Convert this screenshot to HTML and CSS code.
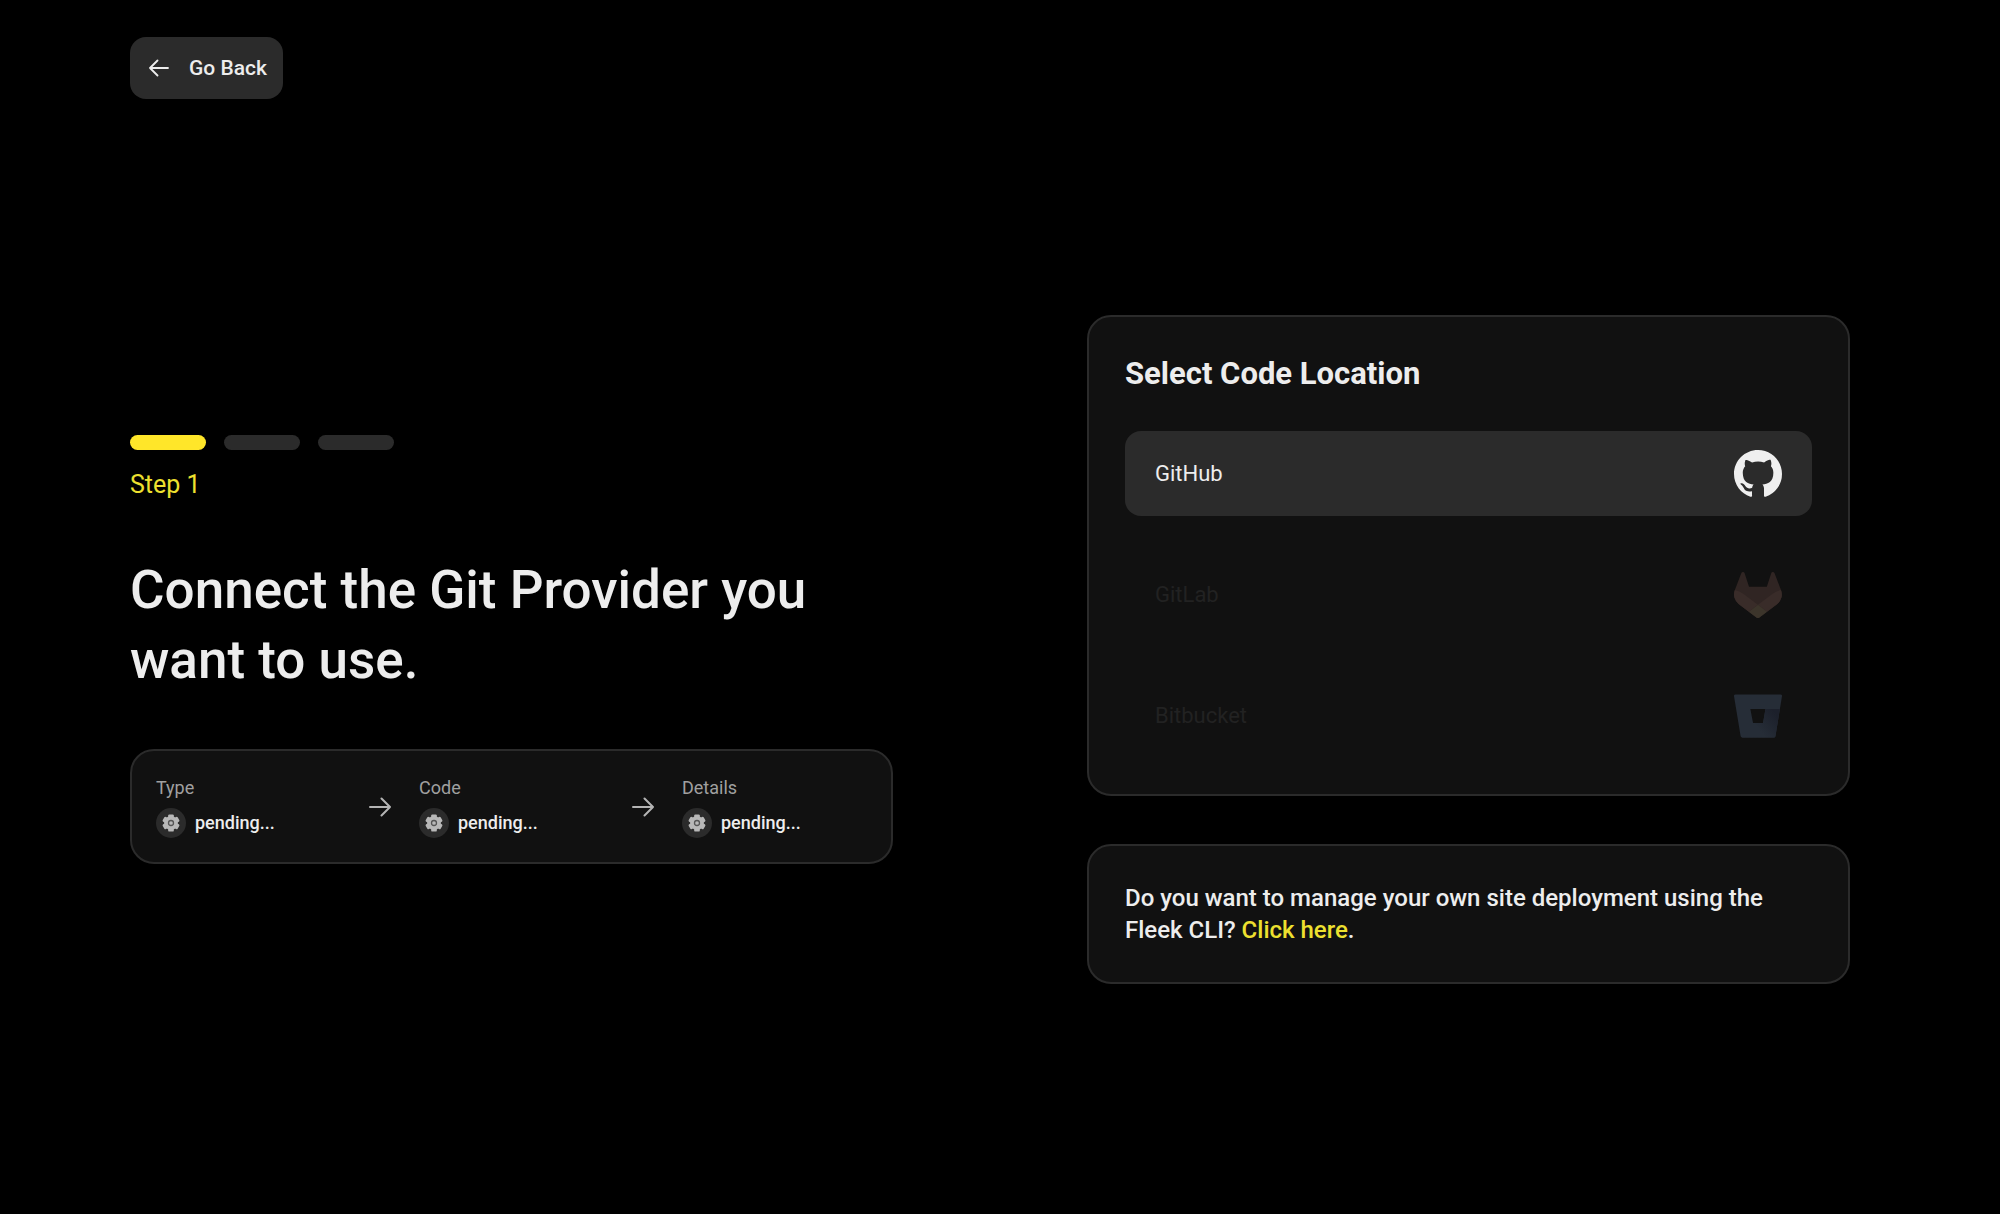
FILE: index.html
```html
<!DOCTYPE html>
<html lang="en">
<head>
<meta charset="utf-8">
<meta name="viewport" content="width=device-width, initial-scale=1">
<title>Connect Git Provider</title>
<link rel="stylesheet" href="styles.css">
</head>
<body>
<svg class="sprite" aria-hidden="true">
  <symbol id="arrow-right" viewBox="0 0 22 20">
    <path d="M1 10h20M12.500 1.500L21 10l-8.500 8.500" fill="none" stroke="currentColor" stroke-width="2" stroke-linecap="round" stroke-linejoin="round"/>
  </symbol>
  <symbol id="gear" viewBox="0 0 18 18">
    <g fill="currentColor">
      <circle cx="9" cy="9" r="6.900"/>
      <rect x="6.200" y="0.400" width="5.600" height="17.200" rx="1.200"/>
      <rect x="6.200" y="0.400" width="5.600" height="17.200" rx="1.200" transform="rotate(60 9 9)"/>
      <rect x="6.200" y="0.400" width="5.600" height="17.200" rx="1.200" transform="rotate(120 9 9)"/>
    </g>
    <circle cx="9" cy="9" r="2.500" fill="none" stroke="#555" stroke-width="1.300"/>
  </symbol>
</svg>

<header class="topbar">
  <button class="back" type="button">
    <svg class="back-icon" viewBox="0 0 20 18" aria-hidden="true"><path d="M19 9H1M8.500 1.500L1 9l7.500 7.500" fill="none" stroke="currentColor" stroke-width="1.800" stroke-linecap="round" stroke-linejoin="round"/></svg>
    Go Back
  </button>
</header>

<main class="content">
  <section class="intro">
    <div class="progress" aria-hidden="true">
      <span class="bar bar-active"></span>
      <span class="bar"></span>
      <span class="bar"></span>
    </div>
    <p class="step-label">Step 1</p>
    <h1 class="headline">Connect the Git Provider you want to use.</h1>
    <div class="card summary">
      <div class="stage">
        <span class="stage-name">Type</span>
        <span class="stage-value"><span class="stage-badge"><svg class="gear" aria-hidden="true"><use href="#gear"/></svg></span>pending...</span>
      </div>
      <svg class="arrow" aria-hidden="true"><use href="#arrow-right"/></svg>
      <div class="stage">
        <span class="stage-name">Code</span>
        <span class="stage-value"><span class="stage-badge"><svg class="gear" aria-hidden="true"><use href="#gear"/></svg></span>pending...</span>
      </div>
      <svg class="arrow" aria-hidden="true"><use href="#arrow-right"/></svg>
      <div class="stage">
        <span class="stage-name">Details</span>
        <span class="stage-value"><span class="stage-badge"><svg class="gear" aria-hidden="true"><use href="#gear"/></svg></span>pending...</span>
      </div>
    </div>
  </section>

  <section class="options">
    <div class="card picker">
      <h2 class="picker-title">Select Code Location</h2>
      <button class="provider" type="button">
        GitHub
        <svg class="logo" viewBox="0 0 16 16" aria-hidden="true"><path fill="#efefef" d="M8 0C3.580 0 0 3.580 0 8c0 3.540 2.290 6.530 5.470 7.590.4.070.55-.17.55-.38 0-.19-.01-.82-.01-1.490-2.010.37-2.530-.49-2.690-.94-.09-.23-.48-.94-.82-1.130-.28-.15-.68-.52-.01-.53.63-.01 1.080.58 1.230.82.72 1.210 1.870.87 2.330.66.07-.52.28-.87.51-1.070-1.780-.2-3.640-.89-3.640-3.950 0-.87.31-1.590.82-2.150-.08-.2-.36-1.020.08-2.120 0 0 .67-.21 2.200.82.64-.18 1.320-.27 2-.27s1.360.09 2 .27c1.530-1.040 2.200-.82 2.200-.82.44 1.100.16 1.920.08 2.120.51.56.82 1.270.82 2.150 0 3.070-1.870 3.750-3.650 3.950.29.25.54.73.54 1.480 0 1.070-.01 1.930-.01 2.200 0 .21.15.46.55.38A8.013 8.013 0 0 0 16 8c0-4.420-3.580-8-8-8z"/></svg>
      </button>
      <button class="provider" type="button" disabled>
        GitLab
        <svg class="logo" viewBox="0 0 25 24" aria-hidden="true">
          <path fill="#302523" d="M24.507 9.500l-.034-.09L21.082.562a.896.896 0 00-1.694.091l-2.290 7.010H7.825L5.535.653a.898.898 0 00-1.694-.09L.451 9.411.416 9.500a6.297 6.297 0 002.090 7.278l.012.010.030.022 5.160 3.867 2.560 1.935 1.554 1.176a1.051 1.051 0 001.268 0l1.555-1.176 2.560-1.935 5.197-3.890.014-.010A6.297 6.297 0 0024.507 9.500z"/>
          <path fill="#392c29" d="M24.507 9.500l-.034-.09a11.440 11.440 0 00-4.560 2.051l-7.447 5.632 4.742 3.584 5.197-3.890.014-.010A6.297 6.297 0 0024.507 9.500z"/>
          <path fill="#3c352b" d="M7.707 20.677l2.560 1.935 1.555 1.176a1.051 1.051 0 001.268 0l1.555-1.176 2.560-1.935-4.743-3.584-4.755 3.584z"/>
          <path fill="#392c29" d="M5.010 11.461a11.430 11.430 0 00-4.560-2.050L.416 9.500a6.297 6.297 0 002.090 7.278l.012.010.030.022 5.160 3.867 4.745-3.584-7.444-5.632z"/>
        </svg>
      </button>
      <button class="provider" type="button" disabled>
        Bitbucket
        <svg class="logo" viewBox="0 0 24 24" aria-hidden="true">
          <defs>
            <linearGradient id="fold" x1="23" y1="9" x2="12" y2="18" gradientUnits="userSpaceOnUse">
              <stop offset="0.200" stop-color="#1c202b"/>
              <stop offset="1" stop-color="#262d37"/>
            </linearGradient>
          </defs>
          <path fill="#262d37" d="M.778 1.213a.768.768 0 00-.768.892l3.263 19.810c.084.5.515.868 1.022.873H19.950a.772.772 0 00.770-.646l3.270-20.030a.768.768 0 00-.768-.891zM14.520 15.530H9.522L8.170 8.466h7.561z"/>
          <path fill="url(#fold)" d="M22.950 8.466h-7.220L14.520 15.530H9.522L3.620 22.540c.190.160.430.250.675.248H19.950a.772.772 0 00.770-.646z"/>
        </svg>
      </button>
    </div>

    <p class="card note">Do you want to manage your own site deployment using the Fleek CLI? <a class="link" href="#cli">Click here</a>.</p>
  </section>
</main>
</body>
</html>
```
FILE: styles.css
```css
* {
  box-sizing: border-box;
}

body {
  display: flex;
  flex-direction: column;
  min-height: 100vh;
  margin: 0;
  padding: 37px 150px 14px 130px;
  background: #000;
  color: #ededed;
  font-family: Roboto, "Noto Sans", sans-serif;
}

h1,
h2,
p {
  margin: 0;
}

button {
  border: 0;
  font: inherit;
  color: inherit;
  cursor: pointer;
}

.sprite {
  display: none;
}

.topbar {
  display: flex;
}

.back {
  display: flex;
  align-items: center;
  gap: 20px;
  padding: 16px 16px 16px 19px;
  border-radius: 16px;
  background: #2b2b2b;
  font-size: 21px;
  font-weight: 500;
  line-height: 30px;
}

.back-icon {
  width: 20px;
  height: 18px;
}

.content {
  flex: 1;
  display: grid;
  grid-template-columns: 1fr 1fr;
  align-items: center;
  gap: 194px;
}

.progress {
  display: flex;
  gap: 18px;
}

.bar {
  width: 76px;
  height: 15px;
  border-radius: 8px;
  background: #2b2b2b;
}

.bar-active {
  background: #ffe629;
}

.step-label {
  margin-top: 19px;
  color: #ede02f;
  font-size: 25px;
  line-height: 32px;
}

.headline {
  margin-top: 54px;
  font-size: 53px;
  font-weight: 500;
  line-height: 70px;
}

.card {
  border: 2px solid #2b2b2b;
  border-radius: 24px;
  background: #111;
}

.summary {
  display: flex;
  align-items: center;
  gap: 28px;
  margin-top: 54px;
  padding: 24px;
}

.stage {
  flex: 1;
  display: grid;
  gap: 8px;
}

.stage-name {
  color: #a0a0a0;
  font-size: 18px;
  line-height: 25px;
}

.stage-value {
  display: flex;
  align-items: center;
  gap: 9px;
  font-size: 18px;
  font-weight: 500;
  line-height: 30px;
}

.stage-badge {
  display: grid;
  place-items: center;
  width: 30px;
  height: 30px;
  border-radius: 50%;
  background: #2b2b2b;
  color: #b8b8b8;
}

.gear {
  width: 18px;
  height: 18px;
}

.arrow {
  width: 22px;
  height: 20px;
  color: #b4b4b4;
}

.options {
  display: grid;
  gap: 48px;
}

.picker {
  display: grid;
  gap: 36px;
  padding: 36px;
}

.picker-title {
  font-size: 31px;
  font-weight: 700;
  line-height: 42px;
}

.provider {
  display: flex;
  align-items: center;
  justify-content: space-between;
  height: 85px;
  padding: 0 30px;
  border-radius: 16px;
  background: #2b2b2b;
  font-size: 22px;
}

.provider:disabled {
  background: none;
  color: #222;
  cursor: default;
}

.logo {
  width: 48px;
  height: 48px;
}

.note {
  padding: 36px;
  font-size: 24px;
  font-weight: 500;
  line-height: 32px;
}

.link {
  color: #ede02f;
  text-decoration: none;
}
```
